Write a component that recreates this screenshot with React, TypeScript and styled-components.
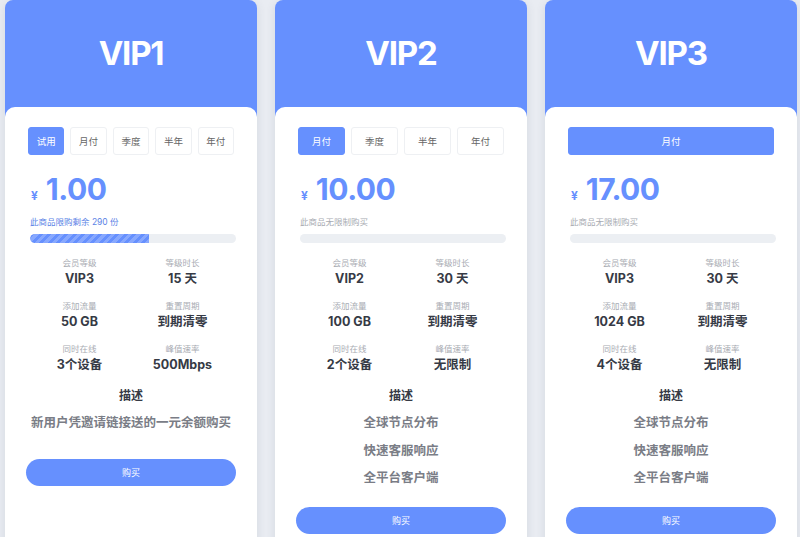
import styled, { createGlobalStyle } from "styled-components";

const GlobalStyle = createGlobalStyle`
  html, body {
    margin: 0;
    padding: 0;
    background: #e9ecf2;
    font-family: Inter, "Noto Sans CJK SC", sans-serif;
    overflow: hidden;
  }
`;

const Page = styled.div`
  display: flex;
  align-items: stretch;
  gap: 18px;
  padding: 0 5px;
  width: 800px;
  height: 537px;
  box-sizing: border-box;
  overflow: hidden;
`;

const Card = styled.div`
  flex: 0 0 252px;
  display: flex;
  flex-direction: column;
  border-radius: 8px 8px 0 0;
  background: radial-gradient(ellipse 50% 55% at 50% 100%, #9ab5ff 0%, #80a2ff 45%, #6690fe 100%);
  box-shadow: 0 2px 10px rgba(60, 70, 100, 0.12);
  overflow: hidden;
  height: 600px;
`;

const Header = styled.div`
  height: 107px;
  display: flex;
  align-items: center;
  justify-content: center;
  color: #fff;
  font-family: Inter, sans-serif;
  font-weight: 700;
  font-size: 33px;
  letter-spacing: -1.2px;
  padding-bottom: 1px;
  box-sizing: border-box;
`;

const Body = styled.div`
  flex: 1;
  background: #fff;
  border-radius: 10px 10px 0 0;
  padding: 20px 23px 0;
  display: flex;
  flex-direction: column;
`;

const Tabs = styled.div`
  display: flex;
  gap: 6px;
`;

const Tab = styled.div<{ $active?: boolean }>`
  flex: 1;
  height: 28px;
  display: flex;
  align-items: center;
  justify-content: center;
  border-radius: 3px;
  font-size: 9.5px;
  color: ${(p) => (p.$active ? "#fff" : "#666")};
  background: ${(p) => (p.$active ? "#6690fe" : "#fff")};
  border: 1px solid ${(p) => (p.$active ? "#6690fe" : "#eef0f3")};
  box-sizing: border-box;
`;

const PriceRow = styled.div`
  display: flex;
  align-items: baseline;
  gap: 8px;
  margin-top: 17px;
  padding-left: 3px;
  color: #6690fe;
  font-weight: 700;
  line-height: 34px;
`;

const Yen = styled.span`
  font-size: 12px;
`;

const Amount = styled.span`
  font-size: 30px;
  letter-spacing: -0.5px;
`;

const Limit = styled.div<{ $blue?: boolean }>`
  margin-top: 2px;
  font-size: 8.5px;
  color: ${(p) => (p.$blue ? "#5b83e6" : "#a8abb2")};
  padding-left: 2px;
`;

const Progress = styled.div`
  margin: 7px -2px 0 2px;
  height: 9px;
  border-radius: 5px;
  background: #eceff3;
  overflow: hidden;
`;

const ProgressFill = styled.div`
  height: 100%;
  border-radius: 5px 0 0 5px;
  background-color: #6690fe;
  background-image: repeating-linear-gradient(
    -45deg,
    rgba(255, 255, 255, 0.22) 0 3px,
    transparent 3px 6px
  );
`;

const Stats = styled.div`
  display: grid;
  grid-template-columns: 1fr 1fr;
  row-gap: 13px;
  margin-top: 14px;
`;

const Stat = styled.div`
  display: flex;
  flex-direction: column;
  align-items: center;
  gap: 2px;
`;

const StatLabel = styled.div`
  font-size: 8.5px;
  color: #a9acb3;
  line-height: 12px;
`;

const StatValue = styled.div`
  font-size: 12.5px;
  font-weight: 700;
  color: #363a45;
  line-height: 16px;
`;

const DescTitle = styled.div`
  margin: 13px 0 3px;
  text-align: center;
  font-size: 12px;
  font-weight: 700;
  color: #363a45;
  line-height: 20px;
`;

const DescLine = styled.div`
  text-align: center;
  font-size: 12.5px;
  font-weight: 700;
  color: #7a7d86;
  line-height: 27.5px;
  white-space: nowrap;
`;

const BuyButton = styled.button<{ $gap: number }>`
  margin: ${(p) => p.$gap}px -2px 0 -2px;
  height: 27px;
  border: none;
  border-radius: 14px;
  background: #6690fe;
  color: #fff;
  font-size: 9px;
  font-family: inherit;
`;

interface Plan {
  name: string;
  tabs: string[];
  price: string;
  limit: string;
  limited?: number;
  stats: [string, string][];
  desc: string[];
  buyGap: number;
}

const plans: Plan[] = [
  {
    name: "VIP1",
    tabs: ["试用", "月付", "季度", "半年", "年付"],
    price: "1.00",
    limit: "此商品限购剩余 290 份",
    limited: 58,
    stats: [
      ["会员等级", "VIP3"],
      ["等级时长", "15 天"],
      ["添加流量", "50 GB"],
      ["重置周期", "到期清零"],
      ["同时在线", "3个设备"],
      ["峰值速率", "500Mbps"],
    ],
    desc: ["新用户凭邀请链接送的一元余额购买"],
    buyGap: 22,
  },
  {
    name: "VIP2",
    tabs: ["月付", "季度", "半年", "年付"],
    price: "10.00",
    limit: "此商品无限制购买",
    stats: [
      ["会员等级", "VIP2"],
      ["等级时长", "30 天"],
      ["添加流量", "100 GB"],
      ["重置周期", "到期清零"],
      ["同时在线", "2个设备"],
      ["峰值速率", "无限制"],
    ],
    desc: ["全球节点分布", "快速客服响应", "全平台客户端"],
    buyGap: 15,
  },
  {
    name: "VIP3",
    tabs: ["月付"],
    price: "17.00",
    limit: "此商品无限制购买",
    stats: [
      ["会员等级", "VIP3"],
      ["等级时长", "30 天"],
      ["添加流量", "1024 GB"],
      ["重置周期", "到期清零"],
      ["同时在线", "4个设备"],
      ["峰值速率", "无限制"],
    ],
    desc: ["全球节点分布", "快速客服响应", "全平台客户端"],
    buyGap: 15,
  },
];

const PlanCard = ({ plan }: { plan: Plan }) => (
  <Card>
    <Header>{plan.name}</Header>
    <Body>
      <Tabs>
        {plan.tabs.map((t, i) => (
          <Tab key={t} $active={i === 0}>
            {t}
          </Tab>
        ))}
      </Tabs>
      <PriceRow>
        <Yen>¥</Yen>
        <Amount>{plan.price}</Amount>
      </PriceRow>
      <Limit $blue={plan.limited !== undefined}>{plan.limit}</Limit>
      <Progress>
        {plan.limited !== undefined && <ProgressFill style={{ width: `${plan.limited}%` }} />}
      </Progress>
      <Stats>
        {plan.stats.map(([label, value]) => (
          <Stat key={label}>
            <StatLabel>{label}</StatLabel>
            <StatValue>{value}</StatValue>
          </Stat>
        ))}
      </Stats>
      <DescTitle>描述</DescTitle>
      {plan.desc.map((d) => (
        <DescLine key={d}>{d}</DescLine>
      ))}
      <BuyButton $gap={plan.buyGap}>购买</BuyButton>
    </Body>
  </Card>
);

export default function App() {
  return (
    <>
      <GlobalStyle />
      <Page>
        {plans.map((p) => (
          <PlanCard key={p.name} plan={p} />
        ))}
      </Page>
    </>
  );
}
